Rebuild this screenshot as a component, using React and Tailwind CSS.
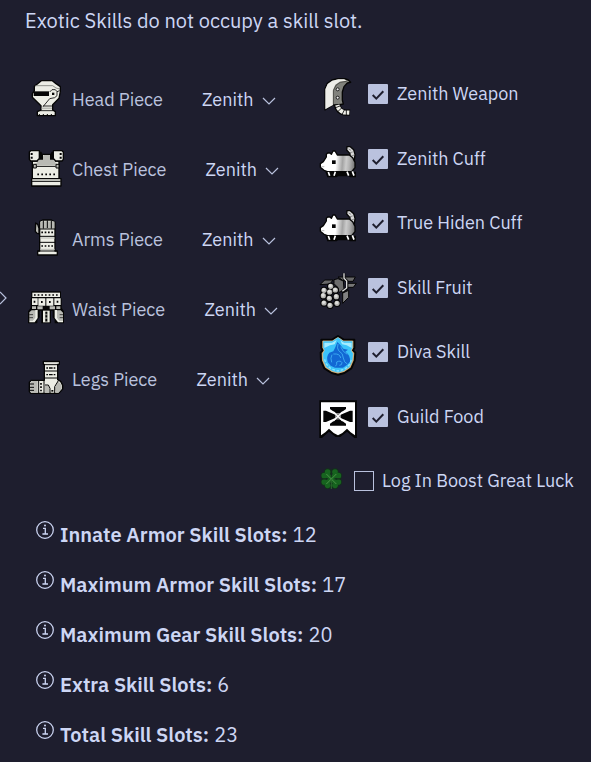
const PALE = '#ecede5'
const GREY = '#b9bab4'
const INK = '#050505'

function HeadIcon() {
  return (
    <svg viewBox="84 21 114 120" className="h-10 w-[38px] shrink-0" strokeLinejoin="round">
      <path d="M124 29H157L168 38L181 47V62L177 82L158 101V117L166 122V134H112V122L123 117V104L97 79V68L103 60V46L112 39Z" fill={PALE} stroke={INK} strokeWidth="4" />
      <path d="M106 44H158L168 51L180 54" fill="none" stroke="#7d7e78" strokeWidth="2.5" />
      <path d="M101 61H147V75H101Z" fill={INK} />
      <path d="M149 63L156 56H166L171 62L179 59M171 62V74L164 80L149 83L129 107" fill="none" stroke={INK} strokeWidth="2.5" />
      <path d="M156 65H163V72H156Z" fill={INK} />
      <path d="M129 105H157M117 119H161" stroke={INK} strokeWidth="2.5" />
      <path d="M125 112H156" stroke={GREY} strokeWidth="5" />
      <path d="M118 133V129M130 133V129M142 133V129M154 133V129" stroke={INK} strokeWidth="3" />
    </svg>
  )
}

function ChestIcon() {
  return (
    <svg viewBox="84 231 114 120" className="h-10 w-[38px] shrink-0" strokeLinejoin="round">
      <path d="M112 250H166V270H177V345H97V270H112Z" fill={PALE} stroke={INK} strokeWidth="4" />
      <path d="M95 323H183V345H95Z" fill={PALE} stroke={INK} strokeWidth="4" />
      <path d="M114 264L127 264L131 252H149L153 264H164V272L174 282H101L114 272Z" fill={GREY} />
      <path d="M114 242H124L129 252V266H116ZM165 242H155L150 252V266H164Z" fill={INK} />
      <path d="M92 239H118V262L111 270H92L88 265V243ZM186 239H160V262L167 270H186L190 265V243Z" fill={PALE} stroke={INK} strokeWidth="4" />
      <path d="M95 246V263M182 246V263" stroke={INK} strokeWidth="6" strokeDasharray="6 5" />
      <path d="M100 280H109V291H100ZM168 280H177V291H168Z" fill={GREY} stroke={INK} strokeWidth="3" />
      <path d="M110 286H167M96 331H182" stroke={INK} strokeWidth="3" />
      <path d="M112 310H165" stroke={INK} strokeWidth="5" strokeDasharray="5 7" />
      <path d="M98 327H180" stroke={GREY} strokeWidth="4" />
    </svg>
  )
}

function ArmsIcon() {
  return (
    <svg viewBox="84 37 114 120" className="h-10 w-[38px] shrink-0" strokeLinejoin="round">
      <path d="M107 52L113 56L117 68V85L110 82L106 77Z" fill={GREY} stroke={INK} strokeWidth="4" />
      <path d="M121 46L128 43H154L165 49V136H172V148H113V136H119V48Z" fill={PALE} stroke={INK} strokeWidth="4" />
      <path d="M122 47H163V69H122Z" fill={GREY} />
      <path d="M130 44V69M142 44V67M154 45V69M119 70H165M119 92H165M119 110H165M114 136H171" stroke={INK} strokeWidth="3" />
      <path d="M121 97H164M121 131H164" stroke={GREY} strokeWidth="3" />
      <path d="M124 80H161M124 121H161" stroke={INK} strokeWidth="5" strokeDasharray="5 5" />
    </svg>
  )
}

function WaistIcon() {
  return (
    <svg viewBox="84 247 114 120" className="h-10 w-[38px] shrink-0" strokeLinejoin="round">
      <path d="M96 259H181V276L183 281V307L190 318V351H166V341L160 334V313H151V351H126V313H117V334L110 342V351H86V318L94 307V281L96 276Z" fill={INK} stroke={INK} strokeWidth="4" />
      <path d="M97 261H180V274H97Z" fill={PALE} />
      <path d="M102 268H177" stroke={INK} strokeWidth="5" strokeDasharray="5 6" />
      <path d="M96 278H113V298H96ZM115 278H136V300H115ZM139 278H160V300H139ZM163 278H182V298H163Z" fill={PALE} />
      <path d="M101 285H106V291H101ZM123 286H128V292H123ZM147 286H152V292H147ZM170 285H175V291H170Z" fill={INK} />
      <path d="M96 302H108V310H96ZM112 302H128V311H112ZM149 302H165V311H149ZM169 302H181V310H169Z" fill={GREY} />
      <path d="M95 314H108V337L100 344H88V320ZM169 314H182L189 321V344H178L169 337Z" fill={GREY} />
      <path d="M106 313H113V337L104 350H88V344H99L106 336ZM164 313H171V336L178 344H189V350H174L164 337Z" fill={PALE} />
      <path d="M88 327H99M88 336H99M179 327H189M179 336H189" stroke={INK} strokeWidth="2" />
      <path d="M129 315H149V350H129Z" fill={PALE} />
      <path d="M139 318V349" stroke="#777871" strokeWidth="7" />
      <path d="M139 318V349" stroke={INK} strokeWidth="5" strokeDasharray="6 5" />
    </svg>
  )
}

function LegsIcon() {
  return (
    <svg viewBox="84 457 114 120" className="h-10 w-[38px] shrink-0" strokeLinejoin="round">
      <path d="M130 467H178V476H173V522L182 527L188 539V550L176 563H92L88 557V530L94 524H133V476H130Z" fill={PALE} stroke={INK} strokeWidth="4" />
      <path d="M91 531L98 526H113V561H93L90 555ZM174 526L185 539V549L175 561H168L164 548Z" fill={GREY} />
      <path d="M132 477H175M134 496H173M134 517H173M116 525V563M132 525V563" stroke={INK} strokeWidth="3" />
      <path d="M133 471H175" stroke={GREY} strokeWidth="3" />
      <path d="M139 487H170M139 507H170" stroke={INK} strokeWidth="4" strokeDasharray="5 3 11 3 5 9" />
      <path d="M90 535H102M90 545H102M90 554H102" stroke={INK} strokeWidth="3" />
      <path d="M123 532V558" stroke={INK} strokeWidth="5" strokeDasharray="5 5" />
      <path d="M135 540H145L149 550V561H135Z" fill={GREY} />
      <path d="M135 538H145L150 548V562M175 525L164 543V562" fill="none" stroke={INK} strokeWidth="3" />
      <path d="M154 553H160V558H154Z" fill={INK} />
    </svg>
  )
}

function WeaponIcon() {
  return (
    <svg viewBox="12 9 120 120" className="h-10 w-10 shrink-0" strokeLinejoin="round">
      <path d="M33 108V44L40 28L54 18L72 14H92L103 18L110 25L100 27L90 38L85 54V78L88 90L74 93H56L48 98Z" fill="#81827c" stroke={INK} strokeWidth="4" />
      <path d="M34 106V46L41 30L55 20L73 16H90L98 20L77 23L64 32L57 48V93L46 99Z" fill="#eeeee9" />
      <path d="M98 22L79 25L66 34L58 50V92" fill="none" stroke="#33342f" strokeWidth="2" />
      <circle cx="71" cy="46" r="4.5" fill="#eee" stroke={INK} strokeWidth="2.5" />
      <circle cx="71" cy="71" r="4.5" fill="#eee" stroke={INK} strokeWidth="2.5" />
      <path d="M69 91Q73 112 90 115L108 116" fill="none" stroke={INK} strokeWidth="19" />
      <path d="M70 93Q74 110 90 115L106 116" fill="none" stroke="#efefe9" strokeWidth="13" />
      <path d="M62 102L78 96M70 114L84 101M84 122L92 106M97 124V108" stroke={INK} strokeWidth="2.5" />
    </svg>
  )
}

function PoogieIcon({ id }) {
  return (
    <svg viewBox="12 201 120 120" className="h-10 w-10 shrink-0" strokeLinejoin="round">
      <defs>
        <linearGradient id={id} gradientUnits="userSpaceOnUse" x1="20" y1="250" x2="120" y2="258">
          <stop offset="0.46" stopColor="#fff" />
          <stop offset="0.56" stopColor="#cfcfcf" />
          <stop offset="0.66" stopColor="#a4a4a4" />
          <stop offset="0.77" stopColor="#cbcbcb" />
          <stop offset="0.87" stopColor="#b2b2b2" />
          <stop offset="1" stopColor="#808080" />
        </linearGradient>
      </defs>
      <path d="M34 290H126V307H108L104 304H72L68 307H40Z" fill={INK} />
      <path d="M99 215H109L119 224L123 238L121 256H108V236L98 225Z" fill="#d8d8d8" stroke={INK} strokeWidth="4" />
      <path d="M104 222L111 226M108 233L116 231M112 243L121 240" stroke="#8a8a8a" strokeWidth="3" />
      <path d="M41 234H48L52 238L57 228H63L70 240H106L116 248L123 262V278L113 290H40L30 286L19 277V266L28 260L37 246V238Z" fill={`url(#${id})`} stroke={INK} strokeWidth="4" />
      <path d="M54 256H65V267H54Z" fill={INK} />
      <path d="M22 275H31" stroke="#bbb" strokeWidth="3" />
      <path d="M43 291L47 302M64 290L60 302M99 290L104 302M115 289L120 302" stroke="#fff" strokeWidth="5" />
    </svg>
  )
}

function ZenithCuffIcon() {
  return <PoogieIcon id="zenith-cuff" />
}

function HidenCuffIcon() {
  return <PoogieIcon id="hiden-cuff" />
}

const BERRIES = [
  [50, 256], [64, 267], [30, 268], [47, 273], [28, 284], [67, 287],
  [46, 292], [30, 306], [69, 307], [48, 313],
]

function FruitIcon() {
  return (
    <svg viewBox="12 210 120 120" className="h-10 w-10 shrink-0">
      <g stroke={INK} strokeWidth="3" strokeLinejoin="round">
        <path d="M18 251L32 237H57L48 249Z" fill="#686868" />
        <path d="M60 236L72 233L88 240L90 264L76 275L70 258L60 248Z" fill="#6c6c6c" />
        <path d="M72 228H124L117 241H98L86 238Z" fill="#686868" />
        <path d="M100 247H127L118 259H100Z" fill="#777" />
        <path d="M86 276L104 268V289L86 307Z" fill="#818181" />
      </g>
      <path d="M90 217V232L99 240V262L84 274" fill="none" stroke={INK} strokeWidth="8" />
      <path d="M90 217V232L98 240V261L85 271" fill="none" stroke="#ddd" strokeWidth="4" />
      {BERRIES.map(([x, y]) => (
        <circle key={`b-${x}-${y}`} cx={x} cy={y} r="11" fill={INK} />
      ))}
      {BERRIES.map(([x, y]) => (
        <g key={`${x}-${y}`}>
          <circle cx={x} cy={y} r="7.8" fill="#b5b5b2" />
          <circle cx={x - 1} cy={y - 2} r="5" fill="#dededb" />
        </g>
      ))}
    </svg>
  )
}

function DivaIcon() {
  return (
    <svg viewBox="12 15 120 120" className="h-10 w-10 shrink-0 overflow-visible" strokeLinejoin="round">
      <path d="M72 18L89 29H121V54L117 61L124 68L122 92L112 115L91 129L72 134L53 129L31 115L21 92L20 68L26 61L22 54V29H55Z" fill="#c89a5d" stroke={INK} strokeWidth="6" />
      <path d="M72 22L88 33H116V53L112 61L118 71L116 91L107 112L89 124L72 128L55 124L36 112L27 91L26 71L31 61L27 53V33H55Z" fill="#3cc4fa" stroke="#e9cf9f" strokeWidth="1.5" />
      <path d="M31 38H54L68 30L62 43L48 46L31 54ZM113 38H90L79 31L84 43L98 46L113 54Z" fill="#a5ecff" />
      <path d="M70 36L79 45L88 56L102 59L94 65Q110 76 108 95L100 104L87 113H63L50 107L41 96Q36 79 46 68L58 64L64 52Z" fill="#1268d4" />
      <path d="M72 42Q68 55 74 62Q88 70 88 84Q90 98 100 102M54 74Q48 84 53 97M58 72Q78 70 80 84M64 109Q70 104 68 96Q80 90 84 98Q84 106 76 106M80 50L88 64L100 73" fill="none" stroke="#42b5f5" strokeWidth="2.5" />
      <path d="M32 88Q36 108 55 118L72 123L90 118Q108 109 112 88" fill="none" stroke="#8ce4ff" strokeWidth="4" strokeDasharray="8 5" />
    </svg>
  )
}

function GuildIcon() {
  return (
    <svg viewBox="12 210 120 120" className="h-10 w-10 shrink-0">
      <path d="M16 211H129V324H121L99 305L79 321H65L45 305L24 324H16Z" fill={INK} />
      <path d="M21 217H123V316L110 307L99 296L85 309L72 316L59 309L45 296L34 307L21 316Z" fill="#fff" />
      <path d="M48 231H96V237L78 250H66L48 237ZM48 287H96V281L78 268H66L48 281ZM28 242H36L64 254V264L36 276H28ZM116 242H108L80 254V264L108 276H116Z" fill={INK} />
      <path d="M66 250H78L80 254V264L78 268H66L64 264V254Z" fill="#777" />
      <path d="M58 245L86 273M86 245L58 273" stroke="#fff" strokeWidth="4" />
    </svg>
  )
}

const LOBES = [[41, 423], [63, 423], [31, 434], [73, 434], [31, 453], [73, 453], [41, 463], [63, 463]]

function CloverIcon() {
  return (
    <svg viewBox="15 405 75 75" className="h-[25px] w-[25px] shrink-0">
      {LOBES.map(([x, y]) => (
        <circle key={`o-${x}-${y}`} cx={x} cy={y} r="11" fill="#14301c" />
      ))}
      {LOBES.map(([x, y]) => (
        <circle key={`${x}-${y}`} cx={x} cy={y} r="8.5" fill="#17641f" />
      ))}
      <path d="M41 423L73 453L63 463L31 434ZM63 423L73 434L41 463L31 453Z" fill="#17641f" />
      <path d="M52 415V438M52 450V460M22 443.5H43M61 443.5H82" stroke="#14301c" strokeWidth="3" />
      <path d="M37 429L67 459M67 429L37 459" stroke="#4a9147" strokeWidth="3" />
      <path d="M52 444V474" stroke="#2b6b2d" strokeWidth="3" />
    </svg>
  )
}

function ChevronDown() {
  return (
    <svg viewBox="0 0 14 8" className="mt-[3px] ml-[7.5px] h-2 w-3.5 shrink-0" fill="none" stroke="#bac2de" strokeWidth="1.2">
      <path d="M1 1L7 7L13 1" />
    </svg>
  )
}

function InfoIcon() {
  return (
    <svg viewBox="0 0 20 20" className="-mt-[10px] h-5 w-5 shrink-0" fill="none" stroke="#cdd6f4">
      <circle cx="10" cy="10" r="8.3" strokeWidth="1.25" />
      <path d="M8 8.4H10.3V14M7.4 14H13" strokeWidth="1.3" />
      <circle cx="10" cy="5.4" r="1" fill="#cdd6f4" stroke="none" />
    </svg>
  )
}

const pieces = [
  { name: 'Head Piece', Icon: HeadIcon, label: 'w-[130px]' },
  { name: 'Chest Piece', Icon: ChestIcon, label: 'w-[133.5px]' },
  { name: 'Arms Piece', Icon: ArmsIcon, label: 'w-[130px]' },
  { name: 'Waist Piece', Icon: WaistIcon, label: 'w-[132.5px]' },
  { name: 'Legs Piece', Icon: LegsIcon, label: 'w-[124.5px]' },
]

const options = [
  { name: 'Zenith Weapon', Icon: WeaponIcon, checked: true },
  { name: 'Zenith Cuff', Icon: ZenithCuffIcon, checked: true },
  { name: 'True Hiden Cuff', Icon: HidenCuffIcon, checked: true },
  { name: 'Skill Fruit', Icon: FruitIcon, checked: true },
  { name: 'Diva Skill', Icon: DivaIcon, checked: true },
  { name: 'Guild Food', Icon: GuildIcon, checked: true },
  { name: 'Log In Boost Great Luck', Icon: CloverIcon, checked: false },
]

const stats = [
  ['Innate Armor Skill Slots:', 12],
  ['Maximum Armor Skill Slots:', 17],
  ['Maximum Gear Skill Slots:', 20],
  ['Extra Skill Slots:', 6],
  ['Total Skill Slots:', 23],
]

function Checkbox({ checked }) {
  if (!checked) return <span className="ml-[10px] h-5 w-5 shrink-0 border border-[#bac2de]" />
  return (
    <span className="ml-[10px] flex h-5 w-5 shrink-0 items-center justify-center rounded-[1px] bg-[#bac2de]">
      <svg viewBox="0 0 20 20" className="h-5 w-5" fill="none" stroke="#1e1e2e" strokeWidth="2">
        <path d="M4.7 11L8.3 14.6L15.3 7.3" />
      </svg>
    </span>
  )
}

export default function App() {
  return (
    <div className="relative h-[762px] w-[591px] overflow-hidden bg-[#1e1e2e] font-['IBM_Plex_Sans',Roboto,sans-serif] text-[18px] whitespace-nowrap text-[#cdd6f4]">
      <p className="h-[41px] pt-[7px] pl-[25px] text-[20px] leading-7">Exotic Skills do not occupy a skill slot.</p>
      <div className="flex h-[469px]">
        <section className="w-[318px] shrink-0 pt-[23px] pl-7">
          {pieces.map(({ name, Icon, label }) => (
            <div key={name} className="flex h-[70px] items-center">
              <div className="-mt-[2px] mr-[6px]"><Icon /></div>
              <span className={`${label} shrink-0 tracking-[-0.02px] text-[#bac2de]`}>{name}</span>
              <span className="w-[52px]">Zenith</span>
              <ChevronDown />
            </div>
          ))}
        </section>
        <section className="pt-[21px]">
          {options.map(({ name, Icon, checked }) => (
            <div key={name} className="flex h-[64.5px] items-center">
              <div className={checked ? 'mt-[6px]' : '-mt-[6px] ml-px'}><Icon /></div>
              <Checkbox checked={checked} />
              <span className={checked ? '-mt-[1.5px] ml-[9px] tracking-[-0.02px]' : '-mt-[1.5px] ml-2 tracking-[-0.02px]'}>{name}</span>
            </div>
          ))}
        </section>
      </div>
      <section className="pl-[35px] text-[20px]">
        {stats.map(([name, value]) => (
          <div key={name} className="flex h-[50px] items-center">
            <InfoIcon />
            <span className="ml-[5px] font-semibold">{name}</span>
            <span className="ml-[5px]">{value}</span>
          </div>
        ))}
      </section>
      <svg viewBox="0 0 8 14" className="absolute top-[291px] left-0 h-3.5 w-2" fill="none" stroke="#bac2de" strokeWidth="1.2">
        <path d="M0 1L6 7L0 13" />
      </svg>
    </div>
  )
}
